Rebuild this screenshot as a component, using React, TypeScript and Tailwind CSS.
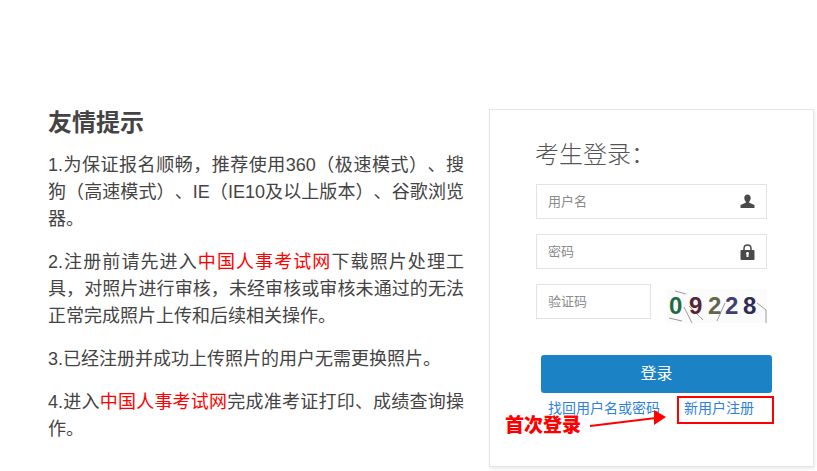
const FONT = "font-['Liberation_Sans','Noto_Sans_CJK_SC',sans-serif]"

const UserIcon = () => (
  <svg width="15" height="15" viewBox="0 0 15 15" fill="#4a4a4a">
    <path d="M7.5 0.5c-2 0-3.2 1.5-3.2 3.4 0 1.5 0.6 2.8 1.5 3.6v1.2c-1.5 0.9-4.3 1.3-5.300 2.600v2.700h14v-2.700c-1-1.300-3.800-1.700-5.300-2.600V7.500c0.900-0.800 1.500-2.100 1.500-3.600 0-1.900-1.200-3.400-3.200-3.400z" />
  </svg>
)

const LockIcon = () => (
  <svg width="15" height="16" viewBox="0 0 15 16">
    <path d="M4 7V4.6C4 2.6 5.5 1 7.5 1S11 2.6 11 4.6V7" fill="none" stroke="#4a4a4a" strokeWidth="1.5" />
    <rect x="0.5" y="6" width="14" height="10" rx="1" fill="#4a4a4a" />
    <rect x="6.5" y="9" width="2" height="4" fill="#fff" />
    <circle cx="7.5" cy="9.500" r="1.400" fill="#fff" />
  </svg>
)

const Field = ({ label, icon, width }: { label: string; icon?: React.ReactNode; width: string }) => (
  <div className={`${width} h-[35px] border border-[#e3e3e3] bg-white flex items-center justify-between pl-[11px] pr-[11px]`}>
    <span className="text-[13px] text-[#8a8a8a]">{label}</span>
    {icon}
  </div>
)

const Captcha = () => (
  <div className="relative w-[100px] h-[34px] mt-[5px] ml-[16px] overflow-hidden bg-[#fbfbfb]">
    <svg className="absolute inset-0" width="100" height="34" fill="none" strokeWidth="1">
      <path d="M8 2l11 3M2 29l13 3M17 18l8 16M22 17l14 14M58 14l-8 18M90 14l9 7v13" stroke="#9a9a9a" />
    </svg>
    <div className="relative flex items-center h-full pl-[2px] text-[24px] font-bold leading-none">
      <span className="text-[#1f6b45] w-[20px]">0</span>
      <span className="text-[#5a2238] w-[19px]">9</span>
      <span className="text-[#62684c] w-[17px]">2</span>
      <span className="text-[#3f3f74] w-[18px]">2</span>
      <span className="text-[#2c2c55]">8</span>
    </div>
  </div>
)

const RedLink = ({ children }: { children: string }) => <span className="text-[#ff0000]">{children}</span>

export default function App() {
  return (
    <div className={`${FONT} [text-spacing-trim:space-all] relative w-[817px] h-[471px] overflow-hidden bg-white flex pt-[109px] pl-[48px]`}>
      {/* Left notes */}
      <div className="w-[416px] text-[#444] text-[18px] leading-[27px] text-justify">
        <h2 className="text-[24px] leading-[27px] font-bold mb-[16px]">友情提示</h2>
        <p className="mb-[16px]">1.为保证报名顺畅，推荐使用360（极速模式）、搜狗（高速模式）、IE（IE10及以上版本）、谷歌浏览器。</p>
        <p className="mb-[16px]">2.注册前请先进入<RedLink>中国人事考试网</RedLink>下载照片处理工具，对照片进行审核，未经审核或审核未通过的无法正常完成照片上传和后续相关操作。</p>
        <p className="mb-[16px]">3.已经注册并成功上传照片的用户无需更换照片。</p>
        <p>4.进入<RedLink>中国人事考试网</RedLink>完成准考证打印、成绩查询操作。</p>
      </div>

      {/* Login card */}
      <div className="ml-[25px] w-[325px] h-[358px] border border-[#e5e5e5] shadow-[1px_2px_3px_rgba(0,0,0,0.08)] pl-[46px] pt-[28px] bg-white">
        <h3 className="text-[24px] leading-[34px] font-light text-[#555] mb-[12px] -ml-[1px]">考生登录：</h3>
        <div className="flex flex-col gap-[15px]">
          <Field label="用户名" width="w-[231px]" icon={<UserIcon />} />
          <Field label="密码" width="w-[231px]" icon={<LockIcon />} />
          <div className="flex">
            <Field label="验证码" width="w-[115px]" />
            <Captcha />
          </div>
        </div>
        <button className="block w-[231px] h-[38px] mt-[32px] ml-[5px] rounded-[3px] bg-[#1c82c6] text-white text-[16px]">登录</button>
        <div className="flex mt-[5px] ml-[12px] text-[14px] leading-[20px] text-[#2f7fe0]">
          <span className="w-[136px]">找回用户名或密码</span>
          <span>新用户注册</span>
        </div>
      </div>

      {/* Red annotation drawn over the form */}
      <div className="absolute left-[677px] top-[396px] w-[97px] h-[28px] border-2 border-[#ff0000]" />
      <div className="absolute left-[505px] top-[415px] text-[19px] leading-[22px] font-black text-[#ff0000]">首次登录</div>
      <svg className="absolute left-[588px] top-[405px]" width="80" height="26" fill="#ff0000">
        <path d="M2 21L68 13" stroke="#ff0000" strokeWidth="2" />
        <path d="M66 5L78 12L66 20z" />
      </svg>
    </div>
  )
}
